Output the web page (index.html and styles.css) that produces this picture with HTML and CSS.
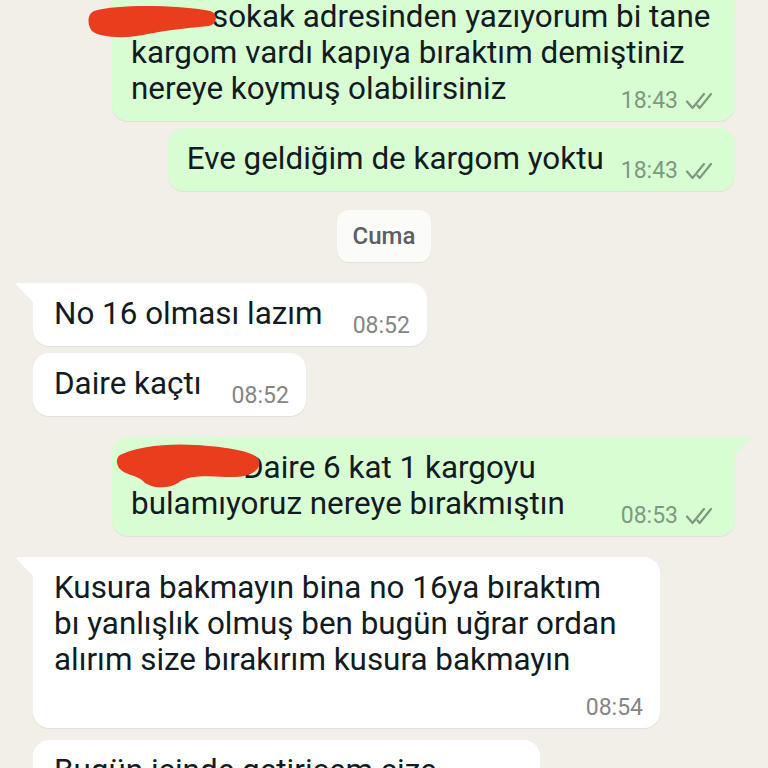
FILE: index.html
```html
<!DOCTYPE html>
<html lang="tr">
<head>
<meta charset="utf-8">
<title>Sohbet</title>
<link rel="stylesheet" href="styles.css">
</head>
<body>
<div class="chat">
  <div class="bubble out tail wide first">
    <span class="redact redact-1"><svg class="blob" width="130" height="36" viewBox="0 0 130 36"><path d="M6 8 C30 1 90 2 122 8 C130 10 130 21 121 23 C100 25 80 27 60 31 C40 36 12 35 4 28 C-1 22 -1 11 6 8 Z"/></svg></span>sokak adresinden yazıyorum bi tane<br>kargom vardı kapıya bıraktım demiştiniz<br>nereye koymuş olabilirsiniz<span class="meta"><span class="time">18:43</span><svg class="ticks" width="32" height="18" viewBox="0 0 32 18"><path d="M2 9.5l5.5 6.5L19 2M12.5 13.5l2.2 2.5L26 2"/></svg></span>
  </div>
  <div class="bubble out cont">Eve geldiğim de kargom yoktu<span class="meta"><span class="time">18:43</span><svg class="ticks" width="32" height="18" viewBox="0 0 32 18"><path d="M2 9.5l5.5 6.5L19 2M12.5 13.5l2.2 2.5L26 2"/></svg></span></div>

  <div class="chip">Cuma</div>

  <div class="bubble in tail after-chip">No 16 olması lazım<span class="meta"><span class="time">08:52</span></span></div>
  <div class="bubble in cont">Daire kaçtı<span class="meta"><span class="time">08:52</span></span></div>

  <div class="bubble out tail wide new">
    <span class="redact redact-2"><svg class="blob" width="146" height="46" viewBox="0 0 146 46"><path d="M4 12 C20 4 50 0 80 2 C110 4 139 8 143 17 C146 28 133 35 110 34 C90 33 72 32 62 40 C53 46 34 46 27 38 C21 32 8 32 3 25 C0 20 0 15 4 12 Z"/></svg></span>Daire 6 kat 1 kargoyu<br>bulamıyoruz nereye bırakmıştın<span class="meta"><span class="time">08:53</span><svg class="ticks" width="32" height="18" viewBox="0 0 32 18"><path d="M2 9.5l5.5 6.5L19 2M12.5 13.5l2.2 2.5L26 2"/></svg></span>
  </div>

  <div class="bubble in tail wide-in new">Kusura bakmayın bina no 16ya bıraktım<br>bı yanlışlık olmuş ben bugün uğrar ordan<br>alırım size bırakırım kusura bakmayın<span class="meta below"><span class="time">08:54</span></span></div>
  <div class="bubble in last">Bugün içinde getiricem size</div>
</div>
</body>
</html>
```
FILE: styles.css
```css
html, body {
  margin: 0;
  padding: 0;
}
body {
  background: #f2efe9;
  font-family: Roboto, "Noto Sans", "Liberation Sans", sans-serif;
  height: 768px;
  overflow: hidden;
}
.chat {
  display: flex;
  flex-direction: column;
  padding: 0 33px;
}
.bubble {
  position: relative;
  display: flow-root;
  box-sizing: border-box;
  max-width: 627px;
  font-size: 31.4px;
  line-height: 36px;
  color: #111b21;
  border-radius: 16px;
  padding: 13px 18px 8px 19px;
  box-shadow: 0 1px 1px rgba(0, 0, 0, 0.07);
}
.out {
  align-self: flex-end;
  background: #d9fdd3;
}
.in {
  align-self: flex-start;
  background: #ffffff;
  padding-left: 21px;
  padding-right: 17px;
}
.tail::before {
  content: "";
  position: absolute;
  top: 0;
  width: 17px;
  height: 19px;
  background: inherit;
}
.out.tail {
  border-top-right-radius: 0;
}
.out.tail::before {
  right: -16px;
  clip-path: polygon(0 0, 88% 0, 100% 6%, 0 100%);
}
.in.tail {
  border-top-left-radius: 0;
}
.in.tail::before {
  left: -17px;
  clip-path: polygon(12% 0, 100% 0, 100% 100%, 0 6%);
}
.wide {
  width: 623px;
}
.wide-in {
  width: 627px;
}
.last {
  width: 507px;
  margin-top: 12px;
}
.first {
  margin-top: -14px;
}
.cont {
  margin-top: 7px;
}
.new {
  margin-top: 21px;
}
.after-chip {
  margin-top: 21px;
}
.chip {
  align-self: center;
  margin-top: 19px;
  padding: 14px 16px;
  font-size: 24px;
  line-height: 24px;
  font-weight: 500;
  color: #5c5f62;
  background: #fbfbfa;
  border-radius: 12px;
  box-shadow: 0 1px 1px rgba(0, 0, 0, 0.06);
}
.meta {
  float: right;
  display: flex;
  align-items: center;
  gap: 7px;
  margin: 18px 0 0 17px;
  font-size: 23px;
  line-height: 24px;
  color: #7d9a7e;
}
.in .meta {
  margin-left: 30px;
  color: #858585;
}
.meta.below {
  float: none;
  justify-content: flex-end;
  margin: 18px 0 0 0;
}
.ticks {
  display: block;
}
.ticks path {
  fill: none;
  stroke: currentColor;
  stroke-width: 2.2;
  stroke-linecap: round;
  stroke-linejoin: round;
}
.redact {
  position: relative;
  display: inline-block;
  height: 0;
}
.redact-1 {
  width: 81px;
}
.redact-2 {
  width: 112px;
}
.blob {
  position: absolute;
  fill: #ea3d1e;
}
.redact-1 .blob {
  left: -43px;
  top: -24px;
}
.redact-2 .blob {
  left: -15px;
  top: -35px;
}
```
